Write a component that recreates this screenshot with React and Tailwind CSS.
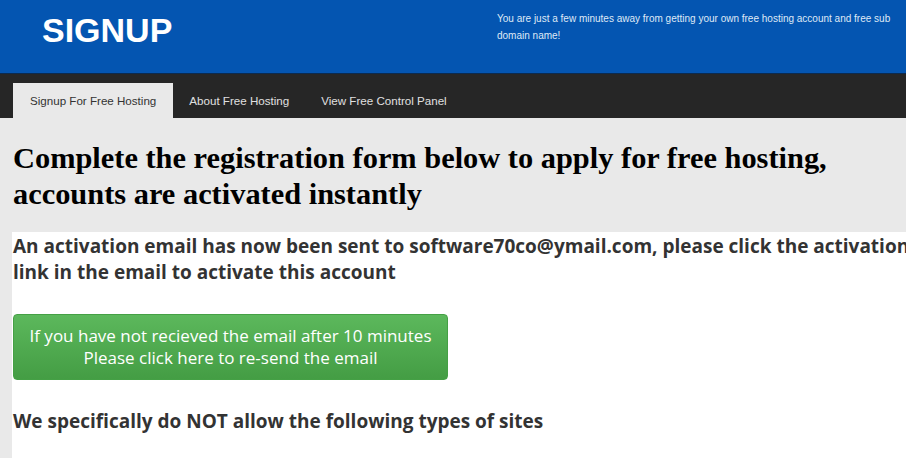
export default function App() {
  const tabs = ["Signup For Free Hosting", "About Free Hosting", "View Free Control Panel"];
  return (
    <div className="w-[906px] h-[458px] overflow-hidden bg-[#e9e9e9] font-['Liberation_Sans',Arial,sans-serif]">
      {/* Header */}
      <header className="h-[74px] bg-[#0455b1] flex border-b border-[#0b2a4f]">
        <div className="w-[497px] pl-[42px] pt-[10px]">
          <h1 className="text-[34px] leading-[40px] font-bold text-white">SIGNUP</h1>
        </div>
        <p className="pt-[10px] w-[398px] text-[10px] leading-[17px] text-[#dfe9f6]">
          You are just a few minutes away from getting your own free hosting account and free sub domain name!
        </p>
      </header>

      {/* Nav */}
      <nav className="h-[44px] bg-[#262626] flex items-end pl-[13px]">
        {tabs.map((t, i) => (
          <a
            key={t}
            className={
              i === 0
                ? "h-[35px] px-[17px] flex items-center text-[11.6px] text-[#333] bg-[#e9e9e9]"
                : "h-[35px] px-[16px] flex items-center text-[11.6px] text-[#e0e0e0]"
            }
          >
            {t}
          </a>
        ))}
      </nav>

      {/* Content */}
      <main className="pt-[22px]">
        <h2 className="px-[13px] font-['Liberation_Serif','Times_New_Roman',serif] font-bold text-[30.4px] leading-[36px] text-black whitespace-nowrap">
          Complete the registration form below to apply for free hosting,
          <br />
          accounts are activated instantly
        </h2>

        <section className="mt-[20px] ml-[12px] w-[960px] bg-white pt-[1px] pb-[40px] font-['Open_Sans',sans-serif] text-[#333]">
          <p className="pl-[1px] text-[19px] leading-[26px] font-bold whitespace-nowrap">
            An activation email has now been sent to software70co@ymail.com, please click the activation
            <br />
            link in the email to activate this account
          </p>

          <button className="mt-[29px] ml-[1px] w-[435px] h-[66px] rounded-[4px] bg-gradient-to-b from-[#5cb85c] to-[#449d44] border border-[#45a045] text-white text-[17px] leading-[22px] text-center">
            If you have not recieved the email after 10 minutes
            <br />
            Please click here to re-send the email
          </button>

          <p className="mt-[28px] pl-[1px] text-[19px] leading-[26px] font-bold">
            We specifically do NOT allow the following types of sites
          </p>
        </section>
      </main>
    </div>
  );
}
